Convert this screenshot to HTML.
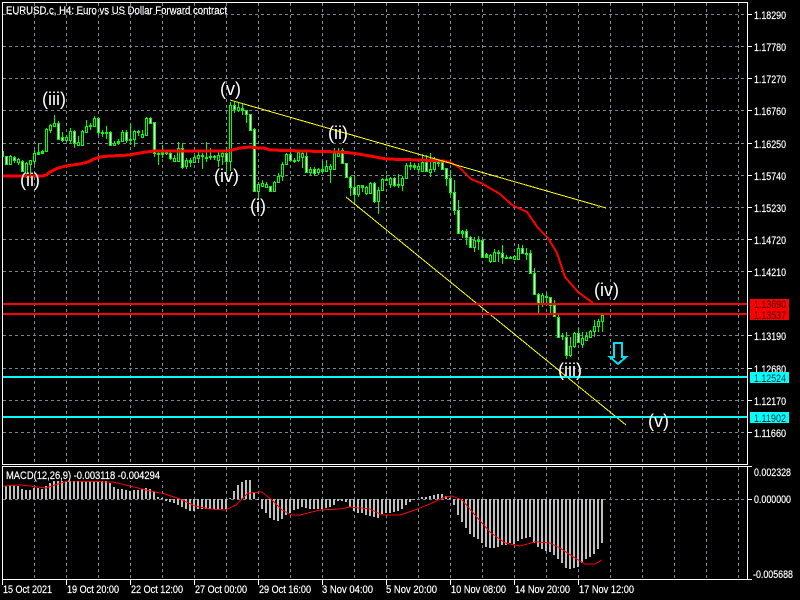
<!DOCTYPE html>
<html><head><meta charset="utf-8"><style>
html,body{margin:0;padding:0;background:#000;width:800px;height:600px;overflow:hidden}
svg{display:block}
text{font-family:"Liberation Sans",sans-serif;fill:#fff}
.s{font-size:11px;stroke:#fff;stroke-width:.2}
.d{font-size:11px}
.w{font-size:18px}
</style></head><body>
<svg width="800" height="600" viewBox="0 0 800 600" xmlns="http://www.w3.org/2000/svg">
<rect width="800" height="600" fill="#000"/>
<g shape-rendering="crispEdges" fill="none">
<!-- grid -->
<path stroke="#778899" stroke-dasharray="3 3" d="M3 14.5H747M3 46.5H747M3 78.5H747M3 110.5H747M3 143.5H747M3 175.5H747M3 207.5H747M3 239.5H747M3 271.5H747M3 335.5H747M3 368.5H747M3 400.5H747M3 432.5H747
M34.5 3V464M66.5 3V464M98.5 3V464M130.5 3V464M162.5 3V464M194.5 3V464M226.5 3V464M258.5 3V464M290.5 3V464M322.5 3V464M354.5 3V464M386.5 3V464M418.5 3V464M450.5 3V464M482.5 3V464M514.5 3V464M546.5 3V464M578.5 3V464M610.5 3V464M642.5 3V464M674.5 3V464M706.5 3V464M738.5 3V464
M34.5 467V579M66.5 467V579M98.5 467V579M130.5 467V579M162.5 467V579M194.5 467V579M226.5 467V579M258.5 467V579M290.5 467V579M322.5 467V579M354.5 467V579M386.5 467V579M418.5 467V579M450.5 467V579M482.5 467V579M514.5 467V579M546.5 467V579M578.5 467V579M610.5 467V579M642.5 467V579M674.5 467V579M706.5 467V579M738.5 467V579M3 499.5H747"/>
<!-- wicks -->
<path stroke="#00ff00" d="M3.5 151V157M6.5 156V165M10.5 155V165M14.5 156V163M18.5 158V165M22.5 160V172M26.5 162V178M30.5 160V178M34.5 150V165M38.5 143V154M42.5 150V154M46.5 128V152M50.5 124V133M54.5 115V127M58.5 121V140M62.5 132V142M66.5 135V142M70.5 128V143M74.5 130V148M78.5 136V146M82.5 130V146M86.5 120V133M90.5 123V130M94.5 116V127M98.5 117V136M102.5 130V137M106.5 126V139M110.5 131V146M114.5 141V146M118.5 139V145M122.5 130V142M126.5 130V143M130.5 123V145M134.5 130V147M138.5 130V136M142.5 130V137M146.5 117V135M150.5 117V123M154.5 122V157M158.5 151V165M162.5 145V158M166.5 150V155M170.5 152V160M174.5 155V162M178.5 142V162M182.5 143V169M186.5 158V169M190.5 158V167M194.5 155V163M198.5 151V163M202.5 153V169M206.5 142V162M210.5 148V160M214.5 155V160M218.5 152V167M222.5 151V165M226.5 147V172M230.5 102V171M234.5 102V113M238.5 103V112M242.5 104V115M246.5 110V123M250.5 114V131M254.5 128V192M258.5 182V200M262.5 180V187M266.5 182V188M270.5 186V192M274.5 181V192M278.5 173V183M282.5 162V181M286.5 153V165M290.5 152V161M294.5 158V163M298.5 151V162M302.5 150V168M306.5 152V173M310.5 167V175M314.5 167V176M318.5 168V175M322.5 161V173M326.5 160V172M330.5 164V183M334.5 148V169M338.5 148V157M342.5 148V164M346.5 163V178M350.5 176V196M354.5 175V205M358.5 185V197M362.5 185V192M366.5 186V195M370.5 182V194M374.5 182V203M378.5 187V214M382.5 178V191M386.5 175V181M390.5 177V188M394.5 177V187M398.5 174V188M402.5 176V191M406.5 163V179M410.5 162V170M414.5 163V170M418.5 163V173M422.5 154V172M426.5 155V172M430.5 153V177M434.5 157V172M438.5 159V167M442.5 160V170M446.5 168V186M450.5 170V195M454.5 180V215M458.5 200V233M462.5 230V238M466.5 229V245M470.5 236V247M474.5 237V252M478.5 236V250M482.5 239V257M486.5 253V257M490.5 254V263M494.5 249V262M498.5 250V262M502.5 245V264M506.5 255V259M510.5 256V259M514.5 255V260M518.5 244V259M522.5 245V254M526.5 248V260M530.5 250V273M534.5 268V295M538.5 293V313M542.5 293V307M546.5 293V305M550.5 297V315M554.5 300V317M558.5 315V338M562.5 333V340M566.5 332V359M570.5 337V357M574.5 332V348M578.5 328V342M582.5 332V348M586.5 332V340M590.5 330V338M594.5 320V337M598.5 319V332M602.5 314V332"/>
<!-- bodies -->
<path stroke="#00ff00" stroke-width="3" d="M6.5 156V165M10.5 156V165M14.5 157V161M18.5 159V163M22.5 161V172M26.5 163V174M30.5 160V165M34.5 153V162M38.5 152V155M42.5 151V154M46.5 129V152M50.5 125V131M54.5 123V127M58.5 123V140M62.5 137V141M66.5 137V141M70.5 131V141M74.5 131V144M78.5 142V146M82.5 131V146M86.5 126V133M90.5 125V127M94.5 118V127M98.5 118V133M102.5 132V134M106.5 132V134M110.5 132V146M114.5 143V146M118.5 141V144M122.5 132V142M126.5 132V141M130.5 139V141M134.5 131V140M138.5 131V133M142.5 134V138M146.5 118V136M150.5 118V124M154.5 122V154M158.5 153V155M162.5 152V155M166.5 152V154M170.5 153V159M174.5 158V162M178.5 148V162M182.5 148V168M186.5 160V167M190.5 160V163M194.5 157V163M198.5 155V159M202.5 155V157M206.5 157V159M210.5 156V158M214.5 156V158M218.5 155V161M222.5 153V157M226.5 153V162M230.5 105V162M234.5 105V110M238.5 107V111M242.5 108V111M246.5 110V115M250.5 114V131M254.5 129V192M258.5 184V192M262.5 183V187M266.5 184V188M270.5 186V192M274.5 182V192M278.5 176V183M282.5 164V177M286.5 154V165M290.5 154V161M294.5 160V162M298.5 152V161M302.5 153V158M306.5 156V173M310.5 169V173M314.5 169V174M318.5 169V173M322.5 169V172M326.5 166V172M330.5 166V170M334.5 153V170M338.5 153V157M342.5 150V164M346.5 163V178M350.5 177V188M354.5 187V195M358.5 185V195M362.5 185V188M366.5 187V194M370.5 183V194M374.5 183V202M378.5 190V202M382.5 179V191M386.5 179V181M390.5 178V185M394.5 178V186M398.5 184V186M402.5 178V186M406.5 165V179M410.5 165V167M414.5 165V168M418.5 166V170M422.5 162V172M426.5 162V172M430.5 169V173M434.5 162V170M438.5 162V164M442.5 162V170M446.5 168V179M450.5 178V193M454.5 192V211M458.5 210V234M462.5 231V234M466.5 231V238M470.5 237V248M474.5 240V248M478.5 240V242M482.5 240V258M486.5 254V258M490.5 255V262M494.5 252V262M498.5 252V254M502.5 253V258M506.5 257V259M510.5 257V259M514.5 256V260M518.5 248V260M522.5 248V254M526.5 253V255M530.5 253V274M534.5 273V295M538.5 294V305M542.5 295V304M546.5 296V298M550.5 297V306M554.5 305V317M558.5 317V338M562.5 335V337M566.5 337V356M570.5 346V356M574.5 333V347M578.5 333V343M582.5 338V345M586.5 336V341M590.5 331V338M594.5 326V332M598.5 321V327M602.5 315V322"/>
<path stroke="#fff" d="M6.5 157V164M14.5 158V160M22.5 162V171M58.5 124V139M62.5 138V140M74.5 132V143M98.5 119V132M110.5 133V145M126.5 133V140M150.5 119V123M154.5 123V153M170.5 154V158M182.5 149V167M226.5 154V161M234.5 106V109M246.5 111V114M250.5 115V130M254.5 130V191M270.5 187V191M290.5 155V160M306.5 157V172M314.5 170V173M342.5 151V163M346.5 164V177M350.5 178V187M354.5 188V194M374.5 184V201M394.5 179V185M426.5 163V171M442.5 163V169M446.5 169V178M450.5 179V192M454.5 193V210M458.5 211V233M466.5 232V237M470.5 238V247M482.5 241V257M502.5 254V257M522.5 249V253M530.5 254V273M534.5 274V294M538.5 295V304M550.5 298V305M554.5 306V316M558.5 318V337M566.5 338V355M578.5 334V342"/>
<path stroke="#000" d="M10.5 157V164M18.5 160V162M26.5 164V173M30.5 161V164M34.5 154V161M46.5 130V151M50.5 126V130M54.5 124V126M66.5 138V140M70.5 132V140M78.5 143V145M82.5 132V145M86.5 127V132M94.5 119V126M114.5 144V145M122.5 133V141M134.5 132V139M142.5 135V137M146.5 119V135M174.5 159V161M178.5 149V161M186.5 161V166M194.5 158V162M198.5 156V158M218.5 156V160M222.5 154V156M230.5 106V161M238.5 108V110M258.5 185V191M262.5 184V186M266.5 185V187M274.5 183V191M278.5 177V182M282.5 165V176M286.5 155V164M298.5 153V160M302.5 154V157M310.5 170V172M318.5 170V172M326.5 167V171M330.5 167V169M334.5 154V169M338.5 154V156M358.5 186V194M366.5 188V193M370.5 184V193M378.5 191V201M382.5 180V190M390.5 179V184M402.5 179V185M406.5 166V178M418.5 167V169M422.5 163V171M430.5 170V172M434.5 163V169M474.5 241V247M490.5 256V261M494.5 253V261M514.5 257V259M518.5 249V259M542.5 296V303M570.5 347V355M574.5 334V346M582.5 339V344M586.5 337V340M590.5 332V337M594.5 327V331M598.5 322V326M602.5 316V321"/>
<!-- moving average -->
<polyline stroke="#ff0000" stroke-width="3" points="3,176 42,176 46,175 50,172 54,170 58,168 62,167 66,166 72,165 80,164 88,162 94,159 100,157 110,156 130,155 134,154 146,152 154,151 226,151 232,150 240,148 250,147 257,148 264,148 270,150 303,151 340,152 352,153 370,156 386,159 420,160 445,161"/>
<polyline stroke="#ff0000" stroke-width="2" points="445,161 450,162 460,168 471,179 483,184 500,194 512,205 527,212 538,228 548,238 557,253 565,277 578,292 593,303"/>
<!-- trend lines -->
<path stroke="#ffff00" d="M230 100L606 208M346 197L626 425"/>
<!-- horizontal levels -->
<rect x="3" y="303" width="744" height="2" fill="#ff0000"/>
<rect x="3" y="313" width="744" height="2" fill="#ff0000"/>
<rect x="3" y="376" width="744" height="2" fill="#00ffff"/>
<rect x="3" y="416" width="744" height="2" fill="#00ffff"/>
<!-- arrow -->
<path stroke="#00e0f0" stroke-width="2" d="M614 343H622V357H626L618 364L610 357H614Z"/>
<!-- histogram -->
<path stroke="#c0c0c0" stroke-width="2" d="M6 499V486M10 499V486M14 499V486M18 499V486M22 499V489M26 499V490M30 499V490M34 499V488M38 499V488M42 499V489M46 499V486M50 499V483M54 499V481M58 499V481M62 499V481M66 499V481M70 499V481M74 499V481M78 499V481M82 499V481M86 499V481M90 499V481M94 499V481M98 499V481M102 499V481M106 499V481M110 499V483M114 499V487M118 499V489M122 499V489M126 499V490M130 499V491M134 499V490M138 499V490M142 499V489M146 499V488M150 499V489M154 499V492M158 499V497M162 499V498M166 499V501M170 499V502M174 499V503M178 499V505M182 499V507M186 499V509M190 499V511M194 499V511M198 499V509M202 499V509M206 499V509M210 499V509M214 499V509M218 499V509M222 499V509M226 499V509M230 499V498M234 499V491M238 499V485M242 499V482M246 499V480M250 499V480M254 499V492M258 499V500M262 499V509M266 499V513M270 499V518M274 499V520M278 499V521M282 499V519M286 499V515M290 499V513M294 499V510M298 499V509M302 499V507M306 499V508M310 499V509M314 499V509M318 499V509M322 499V509M326 499V508M330 499V507M334 499V505M338 499V501M342 499V501M346 499V502M350 499V507M354 499V511M358 499V513M362 499V513M366 499V515M370 499V516M374 499V517M378 499V518M382 499V514M386 499V513M390 499V513M394 499V512M398 499V511M402 499V509M406 499V505M410 499V502M414 499V500M422 499V497M426 499V497M430 499V496M434 499V495M438 499V494M442 499V494M446 499V496M450 499V498M454 499V505M458 499V515M462 499V522M466 499V528M470 499V534M474 499V537M478 499V539M482 499V543M486 499V547M490 499V548M494 499V548M498 499V547M502 499V545M506 499V545M510 499V543M514 499V544M518 499V541M522 499V539M526 499V538M530 499V537M534 499V543M538 499V547M542 499V549M546 499V551M550 499V552M554 499V555M558 499V559M562 499V563M566 499V568M570 499V569M574 499V568M578 499V567M582 499V563M586 499V559M590 499V557M594 499V554M598 499V549M602 499V543"/>
<!-- signal -->
<polyline stroke="#ff0000" points="3,486 20,485 30,486 46,488 58,484 68,481 113,482 130,486 146,490 165,494 180,499 195,506 210,509 225,510 236,505 248,493 262,492 272,500 282,510 292,515 300,515 320,510 340,509 350,507 370,509 382,515 400,515 415,510 430,504 445,497 452,496 462,500 475,515 490,532 505,543 520,546 535,542 550,543 560,548 575,558 585,564 595,564 602,560"/>
<rect x="3" y="467" width="160" height="14" fill="#000"/>
<!-- frames -->
<path stroke="#fff" d="M2.5 2.5H747.5V464.5H2.5ZM2.5 466.5H747.5V579.5H2.5Z
M747 14.5H752M747 46.5H752M747 78.5H752M747 110.5H752M747 143.5H752M747 175.5H752M747 207.5H752M747 239.5H752M747 271.5H752M747 335.5H752M747 368.5H752M747 400.5H752M747 432.5H752
M747 466.5H752M747 499.5H752M747 579.5H752
M2.5 579V585M66.5 579V585M130.5 579V585M194.5 579V585M258.5 579V585M322.5 579V585M386.5 579V585M450.5 579V585M514.5 579V585M578.5 579V585"/>
<!-- price tags -->
<rect x="750" y="299" width="39" height="10" fill="#ff0000"/>
<rect x="750" y="309" width="39" height="11" fill="#ff0000"/>
</g>
<!-- header -->
<text class="s" x="6" y="14" textLength="221" lengthAdjust="spacingAndGlyphs">EURUSD.c, H4:  Euro vs US Dollar Forward contract</text>
<text class="s" x="6" y="479" textLength="154" lengthAdjust="spacingAndGlyphs">MACD(12,26,9) -0.003118 -0.004294</text>
<!-- price axis -->
<text class="s" x="754" y="19" textLength="32" lengthAdjust="spacingAndGlyphs">1.18290</text>
<text class="s" x="754" y="51" textLength="32" lengthAdjust="spacingAndGlyphs">1.17780</text>
<text class="s" x="754" y="83" textLength="32" lengthAdjust="spacingAndGlyphs">1.17270</text>
<text class="s" x="754" y="115" textLength="32" lengthAdjust="spacingAndGlyphs">1.16760</text>
<text class="s" x="754" y="148" textLength="32" lengthAdjust="spacingAndGlyphs">1.16250</text>
<text class="s" x="754" y="180" textLength="32" lengthAdjust="spacingAndGlyphs">1.15740</text>
<text class="s" x="754" y="212" textLength="32" lengthAdjust="spacingAndGlyphs">1.15230</text>
<text class="s" x="754" y="244" textLength="32" lengthAdjust="spacingAndGlyphs">1.14720</text>
<text class="s" x="754" y="276" textLength="32" lengthAdjust="spacingAndGlyphs">1.14210</text>
<text class="s" x="754" y="340" textLength="32" lengthAdjust="spacingAndGlyphs">1.13190</text>
<text class="s" x="754" y="373" textLength="32" lengthAdjust="spacingAndGlyphs">1.12680</text>
<text class="s" x="754" y="405" textLength="32" lengthAdjust="spacingAndGlyphs">1.12170</text>
<text class="s" x="754" y="437" textLength="32" lengthAdjust="spacingAndGlyphs">1.11660</text>
<text class="s" x="754" y="476" textLength="37" lengthAdjust="spacingAndGlyphs">0.002328</text>
<text class="s" x="754" y="503" textLength="37" lengthAdjust="spacingAndGlyphs">0.000000</text>
<text class="s" x="753" y="578" textLength="40" lengthAdjust="spacingAndGlyphs">-0.005688</text>
<rect x="750" y="372" width="39" height="11" fill="#00ffff" shape-rendering="crispEdges"/>
<rect x="750" y="412" width="39" height="11" fill="#00ffff" shape-rendering="crispEdges"/>
<text class="d" x="754" y="308" textLength="32" lengthAdjust="spacingAndGlyphs" style="fill:#400000">1.13690</text>
<text class="d" x="754" y="319" textLength="32" lengthAdjust="spacingAndGlyphs" style="fill:#400000">1.13537</text>
<text class="d" x="754" y="382" textLength="32" lengthAdjust="spacingAndGlyphs" style="fill:#003030">1.12524</text>
<text class="d" x="754" y="422" textLength="32" lengthAdjust="spacingAndGlyphs" style="fill:#003030">1.11902</text>
<!-- time axis -->
<text class="s" x="3" y="593" textLength="49" lengthAdjust="spacingAndGlyphs">15 Oct 2021</text>
<text class="s" x="67" y="593" textLength="52" lengthAdjust="spacingAndGlyphs">19 Oct 20:00</text>
<text class="s" x="131" y="593" textLength="52" lengthAdjust="spacingAndGlyphs">22 Oct 12:00</text>
<text class="s" x="195" y="593" textLength="52" lengthAdjust="spacingAndGlyphs">27 Oct 00:00</text>
<text class="s" x="259" y="593" textLength="52" lengthAdjust="spacingAndGlyphs">29 Oct 16:00</text>
<text class="s" x="322" y="593" textLength="51" lengthAdjust="spacingAndGlyphs">3 Nov 04:00</text>
<text class="s" x="386" y="593" textLength="51" lengthAdjust="spacingAndGlyphs">5 Nov 20:00</text>
<text class="s" x="451" y="593" textLength="55" lengthAdjust="spacingAndGlyphs">10 Nov 08:00</text>
<text class="s" x="515" y="593" textLength="55" lengthAdjust="spacingAndGlyphs">14 Nov 20:00</text>
<text class="s" x="579" y="593" textLength="55" lengthAdjust="spacingAndGlyphs">17 Nov 12:00</text>
<!-- wave labels -->
<text class="w" x="42" y="105">(iii)</text>
<text class="w" x="20" y="186">(ii)</text>
<text class="w" x="220" y="95">(v)</text>
<text class="w" x="214" y="182">(iv)</text>
<text class="w" x="250" y="212">(i)</text>
<text class="w" x="328" y="139">(ii)</text>
<text class="w" x="558" y="376">(iii)</text>
<text class="w" x="594" y="296">(iv)</text>
<text class="w" x="648" y="427">(v)</text>
</svg>
</body></html>
